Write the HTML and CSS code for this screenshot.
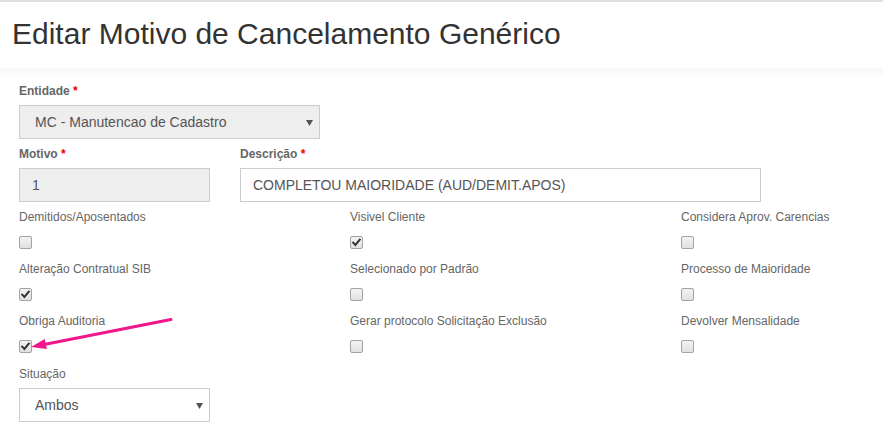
FILE: index.html
```html
<!DOCTYPE html>
<html lang="pt-BR">
<head>
<meta charset="utf-8">
<title>Editar Motivo de Cancelamento Genérico</title>
<link rel="stylesheet" href="styles.css">
</head>
<body>
<div class="page">
  <div class="topbar"></div>
  <header class="page-header">
    <h1>Editar Motivo de Cancelamento Genérico</h1>
  </header>

  <main class="content">
    <div class="field">
      <label class="label-strong">Entidade <span class="req">*</span></label>
      <div class="select select-disabled w-300">
        <span>MC - Manutencao de Cadastro</span>
        <svg class="caret" width="7" height="6" viewBox="0 0 7 6"><path d="M0 0H7L3.5 6Z"/></svg>
      </div>
    </div>

    <div class="row">
      <div class="field w-191">
        <label class="label-strong">Motivo <span class="req">*</span></label>
        <div class="input input-disabled">1</div>
      </div>
      <div class="field w-521">
        <label class="label-strong">Descrição <span class="req">*</span></label>
        <div class="input">COMPLETOU MAIORIDADE (AUD/DEMIT.APOS)</div>
      </div>
    </div>

    <div class="checks">
      <div class="check">
        <span class="check-label">Demitidos/Aposentados</span>
        <span class="box"></span>
      </div>
      <div class="check">
        <span class="check-label">Visivel Cliente</span>
        <span class="box"><svg viewBox="0 0 11 11"><path d="M2.2 5.6L4.4 7.9L8.8 2.6"/></svg></span>
      </div>
      <div class="check">
        <span class="check-label">Considera Aprov. Carencias</span>
        <span class="box"></span>
      </div>

      <div class="check">
        <span class="check-label">Alteração Contratual SIB</span>
        <span class="box"><svg viewBox="0 0 11 11"><path d="M2.2 5.6L4.4 7.9L8.8 2.6"/></svg></span>
      </div>
      <div class="check">
        <span class="check-label">Selecionado por Padrão</span>
        <span class="box"></span>
      </div>
      <div class="check">
        <span class="check-label">Processo de Maioridade</span>
        <span class="box"></span>
      </div>

      <div class="check">
        <span class="check-label">Obriga Auditoria</span>
        <span class="box"><svg viewBox="0 0 11 11"><path d="M2.2 5.6L4.4 7.9L8.8 2.6"/></svg></span>
      </div>
      <div class="check">
        <span class="check-label">Gerar protocolo Solicitação Exclusão</span>
        <span class="box"></span>
      </div>
      <div class="check">
        <span class="check-label">Devolver Mensalidade</span>
        <span class="box"></span>
      </div>
    </div>

    <div class="field field-situacao">
      <label class="label-plain">Situação</label>
      <div class="select w-191">
        <span>Ambos</span>
        <svg class="caret" width="7" height="6" viewBox="0 0 7 6"><path d="M0 0H7L3.5 6Z"/></svg>
      </div>
    </div>

    <div class="field field-next">
      <label class="label-plain">Forma de Devolução</label>
    </div>
  </main>

  <!-- annotation arrow pointing at the "Obriga Auditoria" checkbox -->
  <svg class="annotation" width="883" height="433" viewBox="0 0 883 433">
    <line x1="171" y1="319.5" x2="44" y2="344.5" stroke="#f0168b" stroke-width="3" stroke-linecap="round"/>
    <polygon points="31,347 44.7,339 46.9,349" fill="#f0168b"/>
  </svg>
</div>
</body>
</html>
```

FILE: styles.css
```css
* {
  box-sizing: border-box;
}

html, body {
  margin: 0;
  background: #fff;
}

body {
  font-family: "Liberation Sans", Arial, sans-serif;
  color: #555;
  overflow: hidden;
}

.page {
  position: relative;
  height: 433px;
  overflow: hidden;
}

.topbar {
  height: 2px;
  background: #dde1e4;
}

.page-header {
  height: 66px;
  padding: 15px 0 0 12px;
}

.page-header h1 {
  margin: 0;
  font-size: 30px;
  line-height: 1.1;
  font-weight: normal;
  color: #333;
}

.content {
  padding: 15px 19px 0;
  background: linear-gradient(#f6f6f6, #fff 10px);
  display: flex;
  flex-direction: column;
}

.field label {
  display: block;
  font-size: 12px;
  line-height: 17px;
  color: #666;
  margin-bottom: 5px;
}

.label-strong {
  font-weight: bold;
}

.label-plain {
  font-weight: normal;
}

.req {
  color: #e00;
}

.w-300 { width: 301px; }
.w-191 { width: 191px; }
.w-521 { width: 521px; }

.select,
.input {
  height: 34px;
  border: 1px solid #ccc;
  font-size: 14px;
  color: #555;
  display: flex;
  align-items: center;
  background: #fff;
}

.select {
  justify-content: space-between;
  padding: 0 6px 0 15px;
}

.input {
  padding: 0 12px;
}

.select-disabled,
.input-disabled {
  background: #eee;
}

.caret {
  fill: #555;
  margin-top: 1px;
}

.row {
  display: flex;
  gap: 30px;
  margin-top: 7px;
}

.checks {
  margin-top: 7px;
  display: grid;
  grid-template-columns: repeat(3, 331px);
  row-gap: 12px;
}

.check {
  display: flex;
  flex-direction: column;
  align-items: flex-start;
}

.check-label {
  font-size: 12px;
  line-height: 17px;
  color: #666;
}

.box {
  margin-top: 10px;
  width: 13px;
  height: 13px;
  border: 1px solid #a3a3a3;
  border-radius: 2px;
  background: linear-gradient(#f3f3f3, #e1e1e1);
  display: flex;
}

.box svg {
  width: 11px;
  height: 11px;
  fill: none;
  stroke: #333;
  stroke-width: 2;
  stroke-linecap: square;
}

.field-situacao {
  margin-top: 13px;
}

.field-next {
  margin-top: 10px;
}

.annotation {
  position: absolute;
  left: 0;
  top: 0;
  pointer-events: none;
}
```
